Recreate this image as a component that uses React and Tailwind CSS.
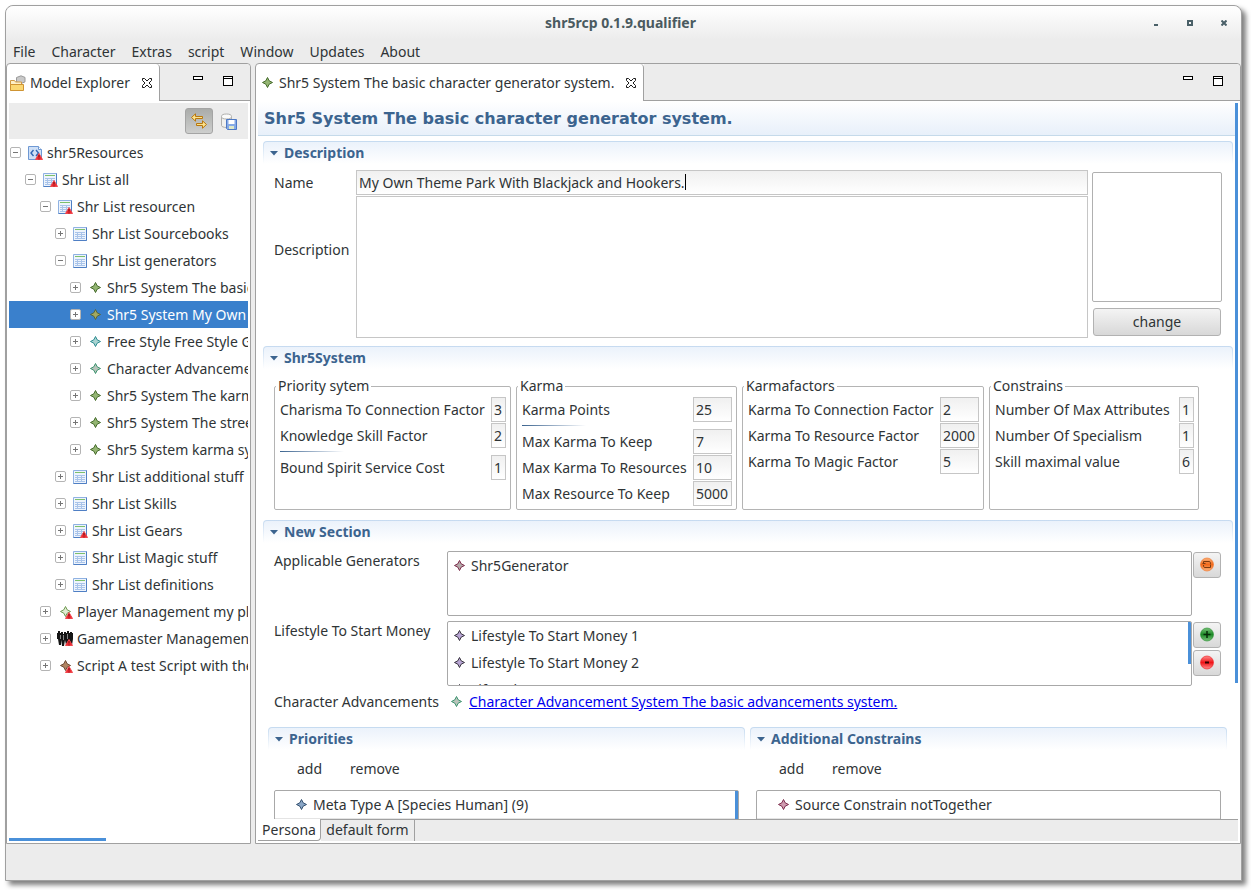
import { useState } from 'react'

const INDENT = ['pl-px', 'pl-4', 'pl-[31px]', 'pl-[46px]', 'pl-[61px]']

const TREE = [
  { level: 0, open: true, icon: 'model', error: true, text: 'shr5Resources' },
  { level: 1, open: true, icon: 'list', error: true, text: 'Shr List all' },
  { level: 2, open: true, icon: 'list', error: true, text: 'Shr List resourcen' },
  { level: 3, icon: 'list', text: 'Shr List Sourcebooks' },
  { level: 3, open: true, icon: 'list', text: 'Shr List generators' },
  { level: 4, icon: 'star', tone: 'green', text: 'Shr5 System The basic character generator system.' },
  { level: 4, icon: 'star', tone: 'olive', text: 'Shr5 System My Own Theme Park With Blackjack and Hookers.' },
  { level: 4, icon: 'star', tone: 'cyan', text: 'Free Style Free Style Generator' },
  { level: 4, icon: 'star', tone: 'teal', text: 'Character Advancement System' },
  { level: 4, icon: 'star', tone: 'green', text: 'Shr5 System The karma system' },
  { level: 4, icon: 'star', tone: 'green', text: 'Shr5 System The street level system' },
  { level: 4, icon: 'star', tone: 'green', text: 'Shr5 System karma system' },
  { level: 3, icon: 'list', text: 'Shr List additional stuff' },
  { level: 3, icon: 'list', text: 'Shr List Skills' },
  { level: 3, icon: 'list', error: true, text: 'Shr List Gears' },
  { level: 3, icon: 'list', text: 'Shr List Magic stuff' },
  { level: 3, icon: 'list', text: 'Shr List definitions' },
  { level: 2, icon: 'star', tone: 'lime', error: true, text: 'Player Management my player' },
  { level: 2, icon: 'crowd', error: true, text: 'Gamemaster Management' },
  { level: 2, icon: 'star', tone: 'brown', error: true, text: 'Script A test Script with the' },
]

const TONES = {
  green: ['#456b2b', '#94b573'],
  olive: ['#56663a', '#a3a860'],
  cyan: ['#2d8d92', '#a9d3d1'],
  teal: ['#3c9470', '#b9c4bb'],
  lime: ['#6f9a52', '#e0ecd2'],
  brown: ['#6b4a33', '#b08462'],
  wine: ['#7d2c4c', '#b5aaaa'],
  pink: ['#7d2c4c', '#cf9db0'],
  violet: ['#37333e', '#b9a6d4'],
  blue: ['#33506f', '#8aa6c6'],
}

function Star({ tone, error }) {
  const [line, fill] = TONES[tone]
  return (
    <svg width="16" height="16" viewBox="0 0 16 16" className="shrink-0">
      <path d="M8.5 2.500 10.200 5.800 13.500 7.500 10.200 9.200 8.500 12.500 6.800 9.200 3.500 7.500 6.800 5.800Z" fill={fill} stroke={line} />
      {error && <ErrorMark />}
    </svg>
  )
}

function ErrorMark() {
  return (
    <g>
      <path d="M12 8.500 15.500 14.500h-7Z" fill="#ee2b33" stroke="#f0474d" />
      <path d="M12 10v2.500M12 13.500v1" stroke="#7a0c10" />
    </g>
  )
}

function ListIcon({ error }) {
  return (
    <svg width="16" height="16" viewBox="0 0 16 16" className="shrink-0">
      <path d="M1.500 1.500h13v13h-13Z" fill="#eef4fc" stroke="#8fb2e2" />
      <path d="M14.500 1.500v13h-13" fill="none" stroke="#4f7fc4" />
      <path d="M3 3.500h10" stroke="#7cc06c" />
      <path d="M3 6.500h10M3 8.500h10M3 10.500h10M3 12.500h10M5.500 6v7M9.500 6v7" stroke="#a9c4ea" />
      {error && <ErrorMark />}
    </svg>
  )
}

function ModelIcon() {
  return (
    <svg width="16" height="16" viewBox="0 0 16 16" className="shrink-0">
      <path d="M1.500 1.500h10l3 3v10h-13Z" fill="#cfe0f7" stroke="#6e98d3" />
      <path d="M11.500 1.500v3h3" fill="#fff" stroke="#6e98d3" />
      <path d="M6.500 5 4 8l2.500 3M9 5l2.500 3L9 11" fill="none" stroke="#2f66b4" strokeWidth="1.400" />
      <ErrorMark />
    </svg>
  )
}

function CrowdIcon() {
  return (
    <svg width="16" height="16" viewBox="0 0 16 16" className="shrink-0">
      <path d="M0 2h1V0h2v2h1V1h2v2h1V1h2v1h1V0h2v2h1V1h2v1h1v6l-1 6h-2l-1-5-1 5H9L8 9l-1 6H5L4.500 9 4 14H2L1 8H0Z" fill="#151515" />
      <path d="M3.500 4v4M6.500 4v5M10.500 3v5" stroke="#8a8a8a" />
      <ErrorMark />
    </svg>
  )
}

function NodeIcon({ item }) {
  if (item.icon === 'model') return <ModelIcon />
  if (item.icon === 'list') return <ListIcon error={item.error} />
  if (item.icon === 'crowd') return <CrowdIcon />
  return <Star tone={item.tone} error={item.error} />
}

function Expander({ open }) {
  return (
    <svg width="11" height="11" viewBox="0 0 11 11" className="shrink-0">
      <rect x="0.5" y="0.5" width="10" height="10" rx="1.500" fill="#fff" stroke="#b4b4b4" />
      <path d={open ? 'M3 5.500h5' : 'M3 5.500h5M5.500 3v5'} stroke="#767676" />
    </svg>
  )
}

function CloseIcon() {
  return (
    <svg width="10" height="10" viewBox="0 0 10 10">
      <path d="M.5.5h2L5 3 7.500.5h2v2L7 5l2.500 2.500v2h-2L5 7 2.500 9.500h-2v-2L3 5 .5 2.500Z" fill="#fff" stroke="#1a1a1a" />
    </svg>
  )
}

function PaneButtons() {
  return (
    <div className="flex items-start gap-5 pt-3">
      <button aria-label="Minimize pane">
        <svg width="10" height="10" viewBox="0 0 10 10"><rect x="0.5" y="0.5" width="9" height="3" fill="#fff" stroke="#000" /></svg>
      </button>
      <button aria-label="Maximize pane">
        <svg width="10" height="10" viewBox="0 0 10 10">
          <rect x="0.5" y="0.5" width="9" height="9" fill="#fff" stroke="#000" />
          <path d="M1 2.500h8" stroke="#000" />
        </svg>
      </button>
    </div>
  )
}

function TitleBar() {
  return (
    <header className="grid h-[34px] grid-cols-[1fr_auto_1fr] items-center rounded-t-lg bg-linear-to-b from-white to-[#ececec] pr-[14px]">
      <span />
      <h1 className="pl-2 font-bold text-[#4a5a60]">shr5rcp 0.1.9.qualifier</h1>
      <div className="flex items-center justify-end gap-7 text-[#4a6068]">
        <button aria-label="Minimize">
          <svg width="6" height="6" viewBox="0 0 6 6"><path d="M1 4h4v2H1Z" fill="currentColor" /></svg>
        </button>
        <button aria-label="Maximize">
          <svg width="6" height="6" viewBox="0 0 6 6"><path d="M1 1h4v4H1Z" fill="none" stroke="currentColor" strokeWidth="2" /></svg>
        </button>
        <button aria-label="Close">
          <svg width="6" height="6" viewBox="0 0 6 6"><path d="M.5.5l5 5M5.500.5l-5 5" stroke="currentColor" strokeWidth="2" /></svg>
        </button>
      </div>
    </header>
  )
}

function MenuBar() {
  return (
    <nav className="flex h-[23px] items-center gap-4 px-[7px]">
      {['File', 'Character', 'Extras', 'script', 'Window', 'Updates', 'About'].map(name => (
        <button key={name}>{name}</button>
      ))}
    </nav>
  )
}

function Explorer() {
  const [selected, setSelected] = useState(6)

  return (
    <aside className="flex w-[245px] shrink-0 flex-col rounded-t border border-[#a0a0a0] bg-white">
      <div className="flex h-[37px] shrink-0">
        <div className="flex w-[153px] items-center gap-1 rounded-tr border-r border-[#a0a0a0] pl-[3px] pr-[7px]">
          <svg width="16" height="16" viewBox="0 0 16 16" className="shrink-0">
            <path d="M6.500 2.500 11 .8l4 1.600v4.500l-4 1.600-4.500-1.600Z" fill="#c9c9c9" stroke="#9a9a9a" />
            <path d="M.5 15.500v-10h4l1 1.500h6v2" fill="#fdf0c8" stroke="#d09a45" />
            <path d="M.5 15.500v-6h13v6Z" fill="#fbd873" stroke="#cf9433" />
          </svg>
          <span>Model Explorer</span>
          <button aria-label="Close Model Explorer" className="ml-auto"><CloseIcon /></button>
        </div>
        <div className="flex flex-1 justify-end rounded-tr border-b border-[#a0a0a0] bg-[#ececec] pr-[17px]">
          <PaneButtons />
        </div>
      </div>

      <div className="flex min-h-0 flex-1 flex-col px-0.5 pt-0.5 pb-0.5">
        <div className="flex h-9 shrink-0 items-center justify-end gap-[7px] bg-[#ececec] pr-[11px]">
          <button aria-label="Link with editor" className="flex h-[26px] w-7 items-center justify-center rounded-[3px] border border-[#a4a4a4] bg-linear-to-b from-[#aaacaa] to-[#cdcecd]">
            <svg width="16" height="16" viewBox="0 0 16 16" fill="#fbe28c" stroke="#b8770f">
              <path d="M.5 4.500 4.500.8V3.500H11.500V5.500H4.500V8.200Z" />
              <path d="M15.500 11.500l-4 3.700V12.500H5.500V10.500h6V7.800Z" />
            </svg>
          </button>
          <button aria-label="Save all resources" className="flex h-[26px] items-center">
            <svg width="17" height="17" viewBox="0 0 17 17">
              <path d="M1.500 3.500v9c0 1 2 2 5 2s5-1 5-2v-9" fill="#f0f0ee" stroke="#b0b0ae" />
              <ellipse cx="6.500" cy="3.500" rx="5" ry="2.500" fill="#fbfbfa" stroke="#b0b0ae" />
              <path d="M6.500 6.500h10v10h-9l-1-1Z" fill="#86aae6" stroke="#4d78c4" />
              <path d="M8.500 7h6v4h-6Z" fill="#fff" />
              <path d="M9 13h5v3H9Z" fill="#dfe9c8" />
            </svg>
          </button>
        </div>

        <ul role="tree" className="min-h-0 flex-1 overflow-hidden">
          {TREE.map((item, i) => (
            <li
              key={item.text}
              role="treeitem"
              aria-selected={i === selected}
              onClick={() => setSelected(i)}
              className={`flex h-[27px] cursor-default items-center overflow-hidden whitespace-nowrap ${INDENT[item.level]} ${i === selected ? 'bg-[#3a80cc] text-white' : ''}`}
            >
              <Expander open={item.open} />
              <span className="ml-1.5 mr-1 flex shrink-0"><NodeIcon item={item} /></span>
              <span>{item.text}</span>
            </li>
          ))}
        </ul>
        <div className="h-[3px] w-[97px] shrink-0 bg-[#4a90d9]" />
      </div>
    </aside>
  )
}

function Section({ title, children }) {
  return (
    <section>
      <div className="rounded-t bg-linear-to-b from-[#c5daf0] to-white px-px pt-px">
        <h3 className="flex h-[22px] items-center gap-1.5 rounded-t-[3px] bg-linear-to-b from-[#ebf2fb] to-white pl-1.5 font-bold text-[#3c648f]">
          <svg width="8" height="5" viewBox="0 0 8 5"><path d="M0 0h8L4 4.500Z" fill="currentColor" /></svg>
          {title}
        </h3>
      </div>
      {children}
    </section>
  )
}

const FIELD = 'h-[25px] border border-[#c6c6c6] bg-linear-to-b from-[#f0f0f0] to-white px-0.5 outline-none'

function Group({ title, className, inputWidth, rows }) {
  return (
    <fieldset className={`min-w-0 rounded-[2px] border border-[#b4b4b4] pl-[5px] pr-1 pb-[3px] ${className}`}>
      <legend className="-ml-1 h-5 px-0.5">{title}</legend>
      <div className="flex flex-col gap-px pt-px">
        {rows.map((row, i) =>
          row === null ? (
            <div key={i} className="flex h-[5px] items-center">
              <div className="h-px w-16 bg-linear-to-r from-[#3c648f] to-white" />
            </div>
          ) : (
            <div key={i} className="flex items-center justify-between whitespace-nowrap">
              <label htmlFor={`${title}-${i}`}>{row[0]}</label>
              <input id={`${title}-${i}`} defaultValue={row[1]} className={`${FIELD} ${inputWidth} shrink-0`} />
            </div>
          )
        )}
      </div>
    </fieldset>
  )
}

function RoundButton({ label, from, to, children }) {
  return (
    <button aria-label={label} className="flex h-[26px] w-7 items-center justify-center rounded-[3px] border border-[#b2b2b2] bg-linear-to-b from-[#f4f4f4] to-[#d8d8d8]">
      <svg width="16" height="16" viewBox="0 0 16 16">
        <defs>
          <linearGradient id={`ball-${label}`} x1="0" y1="0" x2="0" y2="1">
            <stop offset="0" stopColor={from} />
            <stop offset="0.5" stopColor={to} />
            <stop offset="1" stopColor={from} />
          </linearGradient>
        </defs>
        <circle cx="8" cy="7.500" r="6.500" fill={`url(#ball-${label})`} stroke={to} strokeOpacity="0.6" />
        {children}
      </svg>
    </button>
  )
}

function TableSection({ title, tone, item, scroll }) {
  return (
    <Section title={title}>
      <div className="flex gap-7 pl-[29px] pt-[9px]">
        <button>add</button>
        <button>remove</button>
      </div>
      <div className="ml-1.5 mr-1.5 mt-[11px] flex h-16 justify-between rounded-[2px] border border-[#a8a8a8]">
        <div className="flex h-7 flex-1 items-center gap-1 border-b border-[#e4e4e4] pl-[18px]">
          <Star tone={tone} />
          <span>{item}</span>
        </div>
        {scroll && <div className="w-[3px] bg-[#4a90d9]" />}
      </div>
    </Section>
  )
}

function Editor() {
  return (
    <main className="flex min-w-0 flex-1 flex-col rounded-t border border-[#a0a0a0] bg-white">
      <div className="flex h-[37px] shrink-0">
        <div className="flex w-[388px] items-center gap-1 rounded-tr border-r border-[#a0a0a0] pl-[3px] pr-[7px]">
          <Star tone="green" />
          <span className="whitespace-nowrap">Shr5 System The basic character generator system.</span>
          <button aria-label="Close editor" className="ml-auto"><CloseIcon /></button>
        </div>
        <div className="flex flex-1 justify-end rounded-tr border-b border-[#a0a0a0] bg-[#ececec] pr-[17px]">
          <PaneButtons />
        </div>
      </div>

      <div className="flex min-h-0 flex-1 px-0.5">
        <div className="min-w-0 flex-1 overflow-hidden">
          <h2 className="flex h-[35px] items-center border-b border-[#c5daea] bg-linear-to-b from-white to-[#e8f0fa] pl-1.5 pt-0.5 font-['DejaVu_Sans'] text-base font-bold text-[#3c648f]">
            Shr5 System The basic character generator system.
          </h2>

          <div className="pl-[5px] pr-0.5 pt-[5px]">
            <Section title="Description">
              <div className="flex gap-1 pl-[11px] pr-[11px] pt-1.5">
                <div className="min-w-0 flex-1">
                  <div className="flex items-center">
                    <label htmlFor="name" className="w-[82px] shrink-0">Name</label>
                    <div className="relative flex flex-1">
                      <input id="name" defaultValue="My Own Theme Park With Blackjack and Hookers." className={`${FIELD} w-full`} />
                      <span className="absolute left-[329px] top-1 h-4 w-px bg-black" />
                    </div>
                  </div>
                  <div className="mt-px flex items-start">
                    <label htmlFor="description" className="w-[82px] shrink-0 pt-11">Description</label>
                    <textarea id="description" className="h-[142px] flex-1 resize-none border border-[#c6c6c6] outline-none" />
                  </div>
                </div>
                <div className="flex w-[130px] flex-col gap-1.5 pt-0.5">
                  <div className="h-[130px] rounded-[2px] border border-[#b0b0b0]" />
                  <button className="mx-px h-7 rounded-[3px] border border-[#b2b2b2] bg-linear-to-b from-[#f4f4f4] to-[#d8d8d8]">change</button>
                </div>
              </div>
            </Section>

            <div className="mt-2">
              <Section title="Shr5System">
                <div className="flex gap-[5px] pl-[11px] pt-[7px]">
                  <Group
                    title="Priority sytem"
                    className="w-[237px]"
                    inputWidth="w-[15px]"
                    rows={[['Charisma To Connection Factor', 3], ['Knowledge Skill Factor', 2], null, ['Bound Spirit Service Cost', 1]]}
                  />
                  <Group
                    title="Karma"
                    className="w-[221px]"
                    inputWidth="w-[39px]"
                    rows={[['Karma Points', 25], null, ['Max Karma To Keep', 7], ['Max Karma To Resources', 10], ['Max Resource To Keep', 5000]]}
                  />
                  <Group
                    title="Karmafactors"
                    className="w-[242px]"
                    inputWidth="w-[39px]"
                    rows={[['Karma To Connection Factor', 2], ['Karma To Resource Factor', 2000], ['Karma To Magic Factor', 5]]}
                  />
                  <Group
                    title="Constrains"
                    className="w-[210px]"
                    inputWidth="w-[15px]"
                    rows={[['Number Of Max Attributes', 1], ['Number Of Specialism', 1], ['Skill maximal value', 6]]}
                  />
                </div>
              </Section>
            </div>

            <div className="mt-[10px]">
              <Section title="New Section">
                <div className="flex flex-col gap-[5px] pl-[11px] pr-3 pt-2">
                  <div className="flex gap-px">
                    <span className="w-[172px] shrink-0">Applicable Generators</span>
                    <ul className="h-[65px] flex-1 overflow-hidden rounded-[2px] border border-[#a8a8a8] pl-[3px]">
                      <li className="flex h-[27px] items-center gap-1"><Star tone="wine" />Shr5Generator</li>
                    </ul>
                    <div className="pt-px">
                      <RoundButton label="Choose" from="#f9b27c" to="#f26a1b">
                        <path d="M4.500 7V4.500h5.500c1.500 0 1.500 1.500 1.500 2.500M11.500 7.500v3H6c-1.500 0-1.500-1-1.500-2.500M3.500 6.500h3" fill="none" stroke="#7a3a10" />
                      </RoundButton>
                    </div>
                  </div>
                  <div className="flex gap-px">
                    <span className="w-[172px] shrink-0">Lifestyle To Start Money</span>
                    <div className="flex h-[65px] flex-1 overflow-hidden rounded-[2px] border border-[#a8a8a8] pl-[3px]">
                      <ul className="flex-1">
                        {[1, 2, 3].map(n => (
                          <li key={n} className="flex h-[27px] items-center gap-1"><Star tone="violet" />Lifestyle To Start Money {n}</li>
                        ))}
                      </ul>
                      <div className="h-[42px] w-[3px] bg-[#4a90d9]" />
                    </div>
                    <div className="flex flex-col gap-0.5 pt-px">
                      <RoundButton label="Add" from="#79c079" to="#1c8a26">
                        <path d="M8 4v7M4.500 7.500h7" stroke="#062a08" strokeWidth="1.500" />
                      </RoundButton>
                      <RoundButton label="Remove" from="#ff8a8a" to="#f01418">
                        <path d="M6 7.500h4" stroke="#300" strokeWidth="2" />
                      </RoundButton>
                    </div>
                  </div>
                  <div className="flex items-center pt-px">
                    <span className="w-[174px] shrink-0">Character Advancements</span>
                    <Star tone="teal" />
                    <a href="#advancement" className="ml-[5px] text-[#0000ee] underline">Character Advancement System The basic advancements system.</a>
                  </div>
                </div>
              </Section>
            </div>

            <div className="mt-[15px] grid grid-cols-2 gap-[5px] pl-[5px] pr-1.5">
              <TableSection title="Priorities" tone="blue" item="Meta Type A [Species Human] (9)" scroll />
              <TableSection title="Additional Constrains" tone="pink" item="Source Constrain notTogether" />
            </div>
          </div>
        </div>
        <div className="w-[3px] shrink-0 pt-0.5">
          <div className="h-[81%] bg-[#4a90d9]" />
        </div>
      </div>

      <div className="flex h-6 shrink-0 px-0.5 pb-0.5">
        <button className="w-[63px] rounded-br border-b border-r border-[#a0a0a0]">Persona</button>
        <div className="flex flex-1 border-t border-[#a0a0a0] bg-[#ececec]">
          <button className="w-[94px] border-r border-[#a0a0a0] pb-0.5">default form</button>
        </div>
      </div>
    </main>
  )
}

export default function App() {
  return (
    <div className="h-screen bg-white pb-[9px] pl-[5px] pr-[9px] pt-[5px] font-['Noto_Sans',sans-serif] text-sm/5 text-[#2f3436]">
      <div className="flex h-full flex-col rounded-t-lg border border-[#a0a0a0] bg-[#ececec] shadow-[4px_4px_5px_rgba(0,0,0,0.5)]">
        <TitleBar />
        <MenuBar />
        <div className="flex min-h-0 flex-1 gap-1">
          <Explorer />
          <Editor />
        </div>
        <footer className="h-9 shrink-0" />
      </div>
    </div>
  )
}
